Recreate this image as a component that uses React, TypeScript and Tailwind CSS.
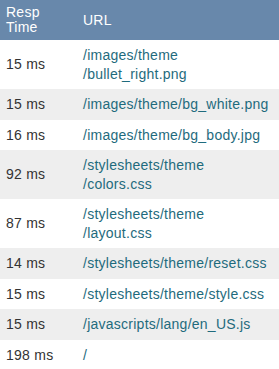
import React from 'react';

interface Row {
    time: string;
    url: string;
}

const rows: Row[] = [
    { time: '15 ms', url: '/images/theme/bullet_right.png' },
    { time: '15 ms', url: '/images/theme/bg_white.png' },
    { time: '16 ms', url: '/images/theme/bg_body.jpg' },
    { time: '92 ms', url: '/stylesheets/theme/colors.css' },
    { time: '87 ms', url: '/stylesheets/theme/layout.css' },
    { time: '14 ms', url: '/stylesheets/theme/reset.css' },
    { time: '15 ms', url: '/stylesheets/theme/style.css' },
    { time: '15 ms', url: '/javascripts/lang/en_US.js' },
    { time: '198 ms', url: '/' }
];

// let long urls wrap before a slash
const breakable = (url: string) => {
    const parts = url.split('/').slice(1);
    if (parts.length === 0) return url;
    return parts.map((p, i) => (
        <React.Fragment key={i}>
            {i > 0 && <wbr />}/{p}
        </React.Fragment>
    ));
};

const App = () => {
    return (
        <div className="w-[279px] bg-white font-['Liberation_Sans',Arial,sans-serif] text-[14px] tracking-[0.25px]">
            <table className="w-full border-collapse table-fixed">
                <thead>
                    <tr className="bg-[#6888ab] text-white">
                        <th className="w-[76px] h-10 px-[6px] text-left font-normal leading-[15px] align-middle">
                            Resp<br />Time
                        </th>
                        <th className="px-[7px] text-left font-normal align-middle">URL</th>
                    </tr>
                </thead>
                <tbody>
                    {rows.map((row, i) => (
                        <tr key={i} className={i % 2 === 1 ? 'bg-[#eeeeee]' : 'bg-white'}>
                            <td className="px-[6px] py-[6px] leading-[18.5px] text-[#333333] align-middle whitespace-nowrap">
                                {row.time}
                            </td>
                            <td className="px-[7px] py-[6px] leading-[18.5px] text-[#1f6b7d] align-middle">
                                {breakable(row.url)}
                            </td>
                        </tr>
                    ))}
                </tbody>
            </table>
        </div>
    );
};

export default App;
